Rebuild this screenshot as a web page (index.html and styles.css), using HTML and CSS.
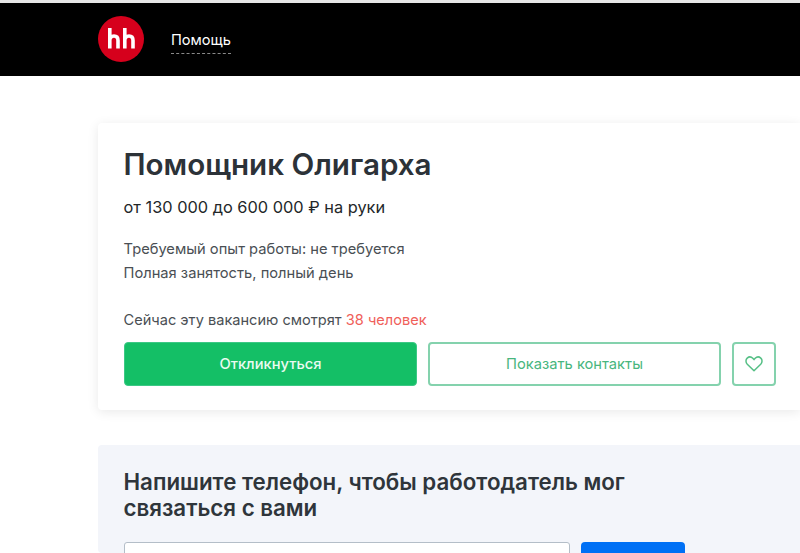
FILE: index.html
```html
<!DOCTYPE html>
<html lang="ru">
<head>
<meta charset="utf-8">
<title>Помощник Олигарха</title>
<link rel="stylesheet" href="styles.css">
</head>
<body>
<header class="header">
  <svg class="logo" width="46" height="46" viewBox="0 0 46 46" aria-label="hh">
    <circle cx="23" cy="23" r="23" fill="#d6001c"/>
    <path d="M11.800 12v20.500M11.800 24.500c0-3 1.800-4.500 4.200-4.500s4 1.500 4 4.500v8M26.800 12v20.500M26.800 24.500c0-3 1.800-4.500 4.200-4.500s4 1.500 4 4.500v8" fill="none" stroke="#fff" stroke-width="3.600"/>
  </svg>
  <a class="help">Помощь</a>
</header>
<main class="main">
  <section class="card">
    <h1 class="title">Помощник Олигарха</h1>
    <p class="salary">от 130 000 до 600 000 ₽ на руки</p>
    <p class="info first">Требуемый опыт работы: не требуется</p>
    <p class="info">Полная занятость, полный день</p>
    <p class="viewers">Сейчас эту вакансию смотрят <span class="count">38 человек</span></p>
    <div class="actions">
      <button class="btn primary">Откликнуться</button>
      <button class="btn outline">Показать контакты</button>
      <button class="btn fav" aria-label="В избранное">
        <svg width="18" height="16" viewBox="0 0 18 16"><path d="M9 14.800 2.300 8.200C.5 6.300.6 3.600 2.200 2.100 3.900.6 6.300.8 7.800 2.300L9 3.600l1.200-1.300c1.500-1.500 3.900-1.700 5.600-.2 1.600 1.500 1.700 4.200-.1 6.100z" fill="none" stroke="#55bf85" stroke-width="1.500" stroke-linejoin="round"/></svg>
      </button>
    </div>
  </section>
  <section class="phone">
    <h2 class="phone-title">Напишите телефон, чтобы работодатель мог связаться с вами</h2>
    <div class="phone-row">
      <div class="input"></div>
      <div class="submit"></div>
    </div>
  </section>
</main>
</body>
</html>
```

FILE: styles.css
```css
html, body {
  margin: 0;
  padding: 0;
  height: 553px;
  overflow: hidden;
  background: #fff;
  font-family: Inter, "Noto Sans", sans-serif;
}
body {
  border-top: 3px solid #e6e6e6;
  box-sizing: border-box;
}
.header {
  height: 73px;
  background: #000;
  display: flex;
  align-items: center;
  padding-left: 98px;
  box-sizing: border-box;
}
.logo {
  display: block;
  margin-top: -1px;
}
.help {
  margin-left: 27px;
  margin-top: 4px;
  color: #fff;
  font-size: 14.6px;
  line-height: 20px;
  padding-bottom: 3px;
  border-bottom: 1px dashed #8a8a8a;
}
.main {
  padding: 47px 0 0 98px;
  width: 800px;
  box-sizing: border-box;
}
.card {
  width: 702px;
  height: 287px;
  box-sizing: border-box;
  padding: 25px 0 0 26px;
  border-radius: 4px 0 0 4px;
  background: #fff;
  box-shadow: 0 2px 12px rgba(0, 0, 0, 0.09);
}
.title {
  margin: 0 0 0 -0.5px;
  font-size: 29.6px;
  line-height: 32px;
  font-weight: 600;
  color: #2c3238;
}
.salary {
  margin: 16px 0 0 -0.5px;
  font-size: 16.35px;
  line-height: 22px;
  color: #232729;
}
.info {
  margin: 0 0 0 -0.5px;
  font-size: 14.7px;
  line-height: 24px;
  color: #4a4f54;
}
.info.first {
  margin-top: 19px;
}
.viewers {
  margin: 25px 0 0 -0.5px;
  font-size: 14.6px;
  line-height: 20px;
  color: #4a4f54;
}
.count {
  color: #f0605a;
}
.actions {
  display: flex;
  gap: 11px;
  margin-top: 12px;
}
.btn {
  height: 44px;
  box-sizing: border-box;
  border-radius: 4px;
  font-family: inherit;
  font-size: 14.7px;
  padding: 0;
}
.primary {
  width: 293px;
  background: #14bf66;
  border: 1px solid #3cc885;
  color: #eafbf1;
  font-weight: 500;
}
.outline {
  width: 293px;
  background: #fff;
  border: 2px solid #84d2ad;
  color: #48b67e;
}
.fav {
  width: 44px;
  background: #fff;
  border: 2px solid #84d2ad;
  display: flex;
  align-items: center;
  justify-content: center;
}
.phone {
  width: 702px;
  height: 108px;
  margin-top: 35px;
  box-sizing: border-box;
  padding: 24px 0 0 26px;
  overflow: hidden;
  background: #f3f5fa;
  border-radius: 4px 0 0 4px;
}
.phone-title {
  margin: 0 0 0 -0.5px;
  width: 520px;
  font-size: 22.3px;
  line-height: 26px;
  font-weight: 600;
  color: #2f353b;
}
.phone-row {
  display: flex;
  gap: 11px;
  margin-top: 21px;
}
.input {
  width: 446px;
  height: 44px;
  box-sizing: border-box;
  background: #fff;
  border: 1px solid #b4bec8;
  border-radius: 3px;
}
.submit {
  width: 104px;
  height: 44px;
  background: #0070f5;
  border-radius: 4px;
}
```
